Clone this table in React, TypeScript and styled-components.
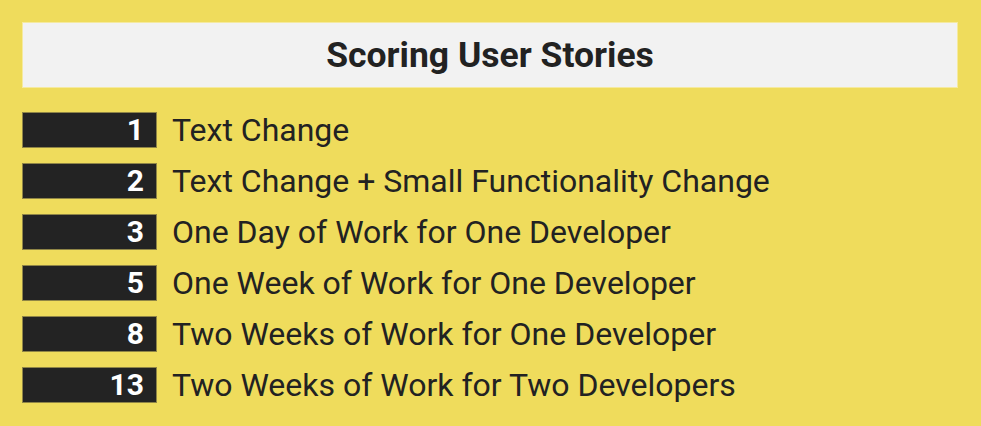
import * as React from "react"
import styled, { createGlobalStyle } from 'styled-components'

const GlobalStyle = createGlobalStyle`
    html, body {
        margin: 0;
        padding: 0;
        background: #efdc5c;
    }
`

const Page = styled.div`
    width: 981px;
    height: 426px;
    box-sizing: border-box;
    padding: 22px 23px 0 22px;
    background: #efdc5c;
    font-family: Roboto, "Liberation Sans", sans-serif;
    color: #222222;
`

const Header = styled.header`
    height: 66px;
    background: #f2f2f2;
    border: 1px solid #f5eaa0;
    box-sizing: border-box;
    display: flex;
    align-items: center;
    justify-content: center;
`

const Title = styled.h1`
    margin: 0;
    font-size: 35.5px;
    font-weight: 700;
    color: #222222;
`

const List = styled.ul`
    list-style: none;
    margin: 24px 0 0;
    padding: 0;
    display: flex;
    flex-direction: column;
    gap: 15px;
`

const Row = styled.li`
    display: flex;
    align-items: center;
    height: 36px;
`

const Score = styled.span`
    width: 135px;
    height: 36px;
    box-sizing: border-box;
    background: #232323;
    border: 1px solid #8f8546;
    color: #ffffff;
    font-size: 30px;
    font-weight: 700;
    line-height: 1;
    display: flex;
    align-items: center;
    justify-content: flex-end;
    padding-right: 12px;
`

const Label = styled.span`
    margin-left: 15px;
    font-size: 32px;
    font-weight: 400;
    line-height: 1;
    color: #222222;
`

const stories = [
    { points: 1, label: 'Text Change' },
    { points: 2, label: 'Text Change + Small Functionality Change' },
    { points: 3, label: 'One Day of Work for One Developer' },
    { points: 5, label: 'One Week of Work for One Developer' },
    { points: 8, label: 'Two Weeks of Work for One Developer' },
    { points: 13, label: 'Two Weeks of Work for Two Developers' },
]

export default function App() {
    return (
        <Page>
            <GlobalStyle />
            <Header>
                <Title>Scoring User Stories</Title>
            </Header>
            <List>
                {stories.map(story =>
                    <Row key={story.points}>
                        <Score>{story.points}</Score>
                        <Label>{story.label}</Label>
                    </Row>
                )}
            </List>
        </Page>
    )
}
